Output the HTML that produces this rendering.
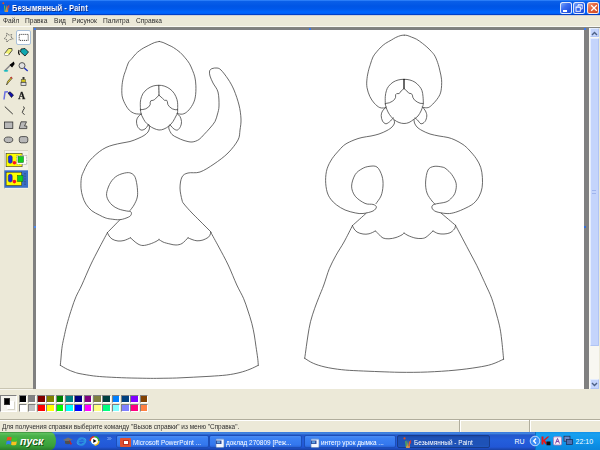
<!DOCTYPE html>
<html><head><meta charset="utf-8">
<style>
*{margin:0;padding:0;box-sizing:border-box}
html,body{width:600px;height:450px;overflow:hidden;background:#ECE9D8;font-family:"Liberation Sans",sans-serif}
#menu span,#status .t,.task .t,#title .t{will-change:transform}
.abs{position:absolute}
#title{left:0;top:0;width:600px;height:15px;background:linear-gradient(#3a8cff 0px,#0a5fe8 1.5px,#0055e5 6px,#0058ea 9px,#0066ff 12px,#0060f8 13.5px,#0040c8 14.5px)}
#title .t{left:11.8px;top:2.6px;color:#fff;font-weight:bold;font-size:8.9px;letter-spacing:0.1px;transform:scaleX(0.84);transform-origin:0 0;white-space:nowrap;text-shadow:1px 1px 0 #0a2c8a}
.wb{top:1.5px;width:12px;height:12px;border:1px solid rgba(255,255,255,0.85);border-radius:2.5px;background:linear-gradient(135deg,#7aa6fa,#3a6cf0 40%,#2455e2 75%,#1d4bd4)}
#menu{left:0;top:15px;width:600px;height:12px;background:#ECE9D8}
#menu span{position:absolute;top:2.2px;font-size:6.62px;color:#2e2e2e;white-space:nowrap}
#canvasarea{left:33px;top:27px;width:567px;height:1.2px;background:#868680}
#canvasarea2{left:33px;top:28px;width:556px;height:361px;background:#808080}
#canvas{left:35.5px;top:29.8px;width:548.5px;height:359px;background:#fff}

#toolbox{left:0;top:27px;width:33px;height:362px;background:#ECE9D8}
.tsel{left:16.2px;top:30.3px;width:14.8px;height:14.3px;background:#fff;border:1px solid #a8bfd8;border-radius:2px}
#optbox{left:4.2px;top:150px;width:24.1px;height:39px;background:#F3F1E7;border-top:1px solid #d8d4c0;border-left:1px solid #d8d4c0}
#palette{left:0;top:389px;width:600px;height:30px;background:#ECE9D8}
.sw{position:absolute;width:8.4px;height:8.2px;border-top:1px solid #808080;border-left:1px solid #808080;border-right:1px solid #fff;border-bottom:1px solid #fff}
#status{left:0;top:419px;width:600px;height:13px;background:#ECE9D8;border-top:1px solid #b0ad9c}
#status .t{left:1.6px;top:2.6px;font-size:6.42px;color:#2e2e2e;white-space:nowrap}
#taskbar{left:0;top:432px;width:600px;height:18px;background:linear-gradient(#3168d5 0px,#4993e6 1px,#2457c9 3px,#245edb 8px,#2157d6 15px,#1941a5 18px)}
#start{left:0;top:432px;width:55.5px;height:18px;border-radius:0 5px 5px 0/0 9px 9px 0;background:linear-gradient(#3a8a3a 0px,#5cc05c 1.5px,#48b048 4px,#3fa83f 10px,#38a038 14px,#2a7d2a 18px)}
#start .t{left:20px;top:2.5px;color:#fff;font-weight:bold;font-style:italic;font-size:10.5px;text-shadow:1px 1px 0 #1c501c}
.task{top:435px;height:12.5px;border-radius:2px;background:linear-gradient(#4a8cf2,#3c81f3 20%,#3377ee 80%,#2a63d8);border:1px solid #1c4eb8}
.task .t{position:absolute;left:16.3px;top:2.7px;color:#fff;font-size:6.45px;white-space:nowrap}
.task.act{background:linear-gradient(#1a48a8,#1e52b7 20%,#1e52b7 80%,#2058c0);border-color:#173c8c}
#tray{left:535px;top:432px;width:65px;height:18px;background:linear-gradient(#1290e8 0px,#18a0f0 2px,#0f94ea 10px,#0b86dc 18px);border-left:1px solid #0a6fc0}
</style></head>
<body>
<div id="title" class="abs">
  <svg class="abs" style="left:2px;top:2px" width="8" height="10" viewBox="0 0 8 10"><circle cx="1.3" cy="1.3" r="1" fill="#e05020"/><path d="M2 4 L3 3 L3.5 9.5 L2.5 9.5Z" fill="#60c040"/><path d="M3.5 9.5 L4.5 2.5 L5 9.5Z" fill="#d0b030"/><path d="M4.8 9.5 L5.5 4 L6.8 3.5 L6 9.5Z" fill="#e06030"/><path d="M6.5 3.5 L7.3 2.5 L7.2 6 L6.5 6Z" fill="#f03020"/><path d="M2.5 8.5 L6.2 8.5 L6 10 L2.8 10Z" fill="#d09050"/></svg>
  <div class="t abs">Безымянный - Paint</div>
  <div class="wb abs" style="left:559.5px"><div class="abs" style="left:2.3px;top:7.3px;width:4.5px;height:1.8px;background:#fff"></div></div>
  <div class="wb abs" style="left:573px"><svg class="abs" style="left:0;top:0" width="10" height="10" viewBox="0 0 10 10"><path d="M4 3.5 V1.8 H8.2 V6 H6.5" fill="none" stroke="#fff" stroke-width="0.9"/><rect x="2" y="4" width="4.3" height="4.3" fill="none" stroke="#fff" stroke-width="0.9"/><path d="M2 4.3 H6.3 M4 2.1 H8.2" stroke="#fff" stroke-width="0.6"/></svg></div>
  <div class="wb abs" style="left:587px;width:11.5px;background:linear-gradient(135deg,#f0a080,#e2603a 45%,#d04a22)"><svg class="abs" style="left:1.5px;top:1.5px" width="8" height="8" viewBox="0 0 8 8"><path d="M1.2 1.2L6.8 6.8M6.8 1.2L1.2 6.8" stroke="#fff" stroke-width="1.3"/></svg></div>
</div>
<div id="menu" class="abs">
  <div class="abs" style="left:0;top:0;width:600px;height:1px;background:#cfd0d6"></div>
  <span style="left:3px">Файл</span>
  <span style="left:25.3px">Правка</span>
  <span style="left:53.7px">Вид</span>
  <span style="left:72px">Рисунок</span>
  <span style="left:103px">Палитра</span>
  <span style="left:136px">Справка</span>
</div>

<div id="toolbox" class="abs"></div>
<div class="abs" style="left:0;top:25.8px;width:600px;height:1px;background:#faf9f3"></div>
<div class="tsel abs"></div>
<div id="tools" class="abs" style="left:0;top:0;width:33px;height:190px">
<svg width="33" height="190" viewBox="0 0 33 190" style="position:absolute;left:0;top:0">
 <!-- free select -->
 <path d="M6.8 33.3 L9.1 35.2 L11.7 34.6 L11 37.2 L13.2 38.8 L9.6 39.6 L6.8 42 L6.4 39.4 L4.2 38.6 L6.4 36.5 Z" fill="none" stroke="#333" stroke-width="0.75" stroke-dasharray="1 0.7"/>
 <!-- rect select -->
 <rect x="19.2" y="34.4" width="9" height="6" fill="none" stroke="#222" stroke-width="0.8" stroke-dasharray="1.2 0.8"/>
 <!-- eraser -->
 <path d="M4.5 53.5 L8.5 48.5 L12 48.5 L12 50.5 L8.5 55 L4.5 55 Z" fill="#f0f070" stroke="#333" stroke-width="0.8"/>
 <path d="M4.5 53.5 L8 53.5 L8.5 55 L4.5 55Z" fill="#fff"/>
 <!-- fill -->
 <path d="M21 49 L25 48.5 L28.5 52 L25 56 L20.5 52 Z" fill="#10a8b0" stroke="#111" stroke-width="0.8"/>
 <path d="M19 50 Q18 53 19.5 55" fill="none" stroke="#000" stroke-width="1.2"/>
 <!-- picker -->
 <path d="M5 70.5 L11 64.5" stroke="#888" stroke-width="1.6"/>
 <path d="M10.5 65 L13.5 62.5 L14 64 L12 66.5Z" fill="#000" stroke="#000" stroke-width="1.2"/>
 <ellipse cx="6" cy="70.8" rx="2.4" ry="0.9" fill="#10b8c0"/>
 <!-- magnifier -->
 <circle cx="22" cy="65.6" r="3" fill="#e0e0e0" stroke="#555" stroke-width="1"/>
 <path d="M24.3 68 L27.7 71" stroke="#2030c0" stroke-width="1.4"/>
 <!-- pencil -->
 <path d="M6.5 85 L7.5 81.5 L11 77.5 L12 78.5 L8.5 82.5 Z" fill="#e8d020" stroke="#222" stroke-width="0.6"/>
 <path d="M10.5 77.5 L11.5 77 L12 78.3Z" fill="#c03030" stroke="#c03030" stroke-width="0.8"/>
 <!-- brush -->
 <rect x="22.5" y="77" width="2" height="3" fill="#333"/>
 <rect x="21.2" y="79.5" width="4.5" height="2.6" fill="#d8c818" stroke="#444" stroke-width="0.5"/>
 <rect x="21" y="82.3" width="5" height="3.3" fill="#ddd" stroke="#222" stroke-width="0.6"/>
 <!-- airbrush -->
 <path d="M4 99.5 L5 92 L8 91.8" fill="none" stroke="#6a70e0" stroke-width="1.5"/>
 <path d="M8 93 L10 91.8 L13.5 95 L11.5 97.5 Z" fill="#1010b0" stroke="#000" stroke-width="0.6"/>
 <!-- text A -->
 <text x="18.2" y="98.8" font-family="Liberation Serif" font-weight="bold" font-size="9.6px" fill="#111" stroke="#333" stroke-width="0.3">A</text>
 <!-- line -->
 <path d="M4.8 106.6 L12.8 114.1" stroke="#222" stroke-width="0.9"/>
 <!-- curve -->
 <path d="M23.5 106.5 Q25.5 108 23 110.5 Q21 112.5 24.5 114.8" fill="none" stroke="#222" stroke-width="0.9"/>
 <!-- rect -->
 <rect x="4.5" y="122" width="8.3" height="6.4" fill="#b8b8b8" stroke="#333" stroke-width="0.8"/>
 <!-- polygon -->
 <path d="M21 121.8 L26.5 121.8 L24.5 126 L26.8 126 L26.8 128.6 L19.2 128.6 Z" fill="#b8b8b8" stroke="#333" stroke-width="0.8"/>
 <!-- ellipse -->
 <ellipse cx="8.5" cy="139.8" rx="4.3" ry="2.8" fill="#b8b8b8" stroke="#333" stroke-width="0.8"/>
 <!-- rounded rect -->
 <rect x="19.3" y="136.6" width="8.5" height="6.2" rx="2" fill="#b8b8b8" stroke="#333" stroke-width="0.8"/>
</svg>
</div>
<div id="optbox" class="abs"></div>
<svg class="abs" style="left:0;top:145px" width="33" height="50" viewBox="0 145 33 50">
 <rect x="6.1" y="153.3" width="16" height="13.4" fill="#ffff00" stroke="#333" stroke-width="0.6"/>
 <rect x="16.7" y="155.6" width="10" height="8.8" fill="#fff" stroke="#555" stroke-width="0.5" stroke-dasharray="1 0.6"/>
 <rect x="8.3" y="155.5" width="3.9" height="7.8" rx="1.8" fill="#1830e0" stroke="#102080" stroke-width="0.5"/>
 <circle cx="14.4" cy="162.8" r="1.8" fill="#ff1020"/>
 <rect x="18" y="156.5" width="5.5" height="6" fill="#10d020" stroke="#106010" stroke-width="0.5"/>
 <rect x="4.3" y="170.3" width="23.7" height="17.5" fill="#3a6fc8"/>
 <rect x="6.1" y="172.2" width="15.6" height="13.4" fill="#ffff00" stroke="#333" stroke-width="0.6"/>
 <rect x="8.3" y="174.3" width="3.9" height="7.8" rx="1.8" fill="#1830e0" stroke="#102080" stroke-width="0.5"/>
 <circle cx="14.4" cy="181.6" r="1.8" fill="#ff1020"/>
 <rect x="17.5" y="175.5" width="5.5" height="6" fill="#10d020" stroke="#106010" stroke-width="0.5"/>
 <path d="M25 173 L25 185" stroke="#222" stroke-width="0.6" stroke-dasharray="0.8 0.8"/>
</svg>
<div id="palette" class="abs"></div>
<div class="abs" style="left:0;top:388.4px;width:33px;height:1px;background:#c9c5b2"></div><div class="abs" style="left:0;top:389.4px;width:33px;height:1px;background:#f6f5ee"></div>
<div class="abs" style="left:0;top:394.8px;width:16.8px;height:17px;border-top:1px solid #808080;border-left:1px solid #808080;border-right:1px solid #fff;border-bottom:1px solid #fff;background:#F5F4EE"></div>
<div class="abs" style="left:7.2px;top:401.4px;width:7.8px;height:8.3px;background:#fff;border:1px solid #d6d4c8;border-top-color:#fff;border-left-color:#fff"></div>
<div class="abs" style="left:3.6px;top:398px;width:6.7px;height:7px;background:#000;border:0.5px solid #333"></div>
<div class="sw" style="left:18.50px;top:394.6px;background:#000000"></div><div class="sw" style="left:18.50px;top:403.8px;background:#FFFFFF"></div>
<div class="sw" style="left:27.83px;top:394.6px;background:#808080"></div><div class="sw" style="left:27.83px;top:403.8px;background:#C0C0C0"></div>
<div class="sw" style="left:37.16px;top:394.6px;background:#800000"></div><div class="sw" style="left:37.16px;top:403.8px;background:#FF0000"></div>
<div class="sw" style="left:46.49px;top:394.6px;background:#808000"></div><div class="sw" style="left:46.49px;top:403.8px;background:#FFFF00"></div>
<div class="sw" style="left:55.82px;top:394.6px;background:#008000"></div><div class="sw" style="left:55.82px;top:403.8px;background:#00FF00"></div>
<div class="sw" style="left:65.15px;top:394.6px;background:#008080"></div><div class="sw" style="left:65.15px;top:403.8px;background:#00FFFF"></div>
<div class="sw" style="left:74.48px;top:394.6px;background:#000080"></div><div class="sw" style="left:74.48px;top:403.8px;background:#0000FF"></div>
<div class="sw" style="left:83.81px;top:394.6px;background:#800080"></div><div class="sw" style="left:83.81px;top:403.8px;background:#FF00FF"></div>
<div class="sw" style="left:93.14px;top:394.6px;background:#808040"></div><div class="sw" style="left:93.14px;top:403.8px;background:#FFFF80"></div>
<div class="sw" style="left:102.47px;top:394.6px;background:#004040"></div><div class="sw" style="left:102.47px;top:403.8px;background:#00FF80"></div>
<div class="sw" style="left:111.80px;top:394.6px;background:#0080FF"></div><div class="sw" style="left:111.80px;top:403.8px;background:#80FFFF"></div>
<div class="sw" style="left:121.13px;top:394.6px;background:#004080"></div><div class="sw" style="left:121.13px;top:403.8px;background:#8080FF"></div>
<div class="sw" style="left:130.46px;top:394.6px;background:#8000FF"></div><div class="sw" style="left:130.46px;top:403.8px;background:#FF0080"></div>
<div class="sw" style="left:139.79px;top:394.6px;background:#804000"></div><div class="sw" style="left:139.79px;top:403.8px;background:#FF8040"></div>

<div id="status" class="abs"><div class="abs" style="left:0;top:0;width:600px;height:1px;background:#fff"></div><div class="t abs">Для получения справки выберите команду "Вызов справки" из меню "Справка".</div>
<div class="abs" style="left:459px;top:0;width:2px;height:13px;border-left:1px solid #b0ad9c;border-right:1px solid #fff"></div>
<div class="abs" style="left:529px;top:0;width:2px;height:13px;border-left:1px solid #b0ad9c;border-right:1px solid #fff"></div>
</div>
<div id="taskbar" class="abs"></div>
<div id="start" class="abs"><div class="t abs">пуск</div>
 <svg class="abs" style="left:5.5px;top:2.5px" width="12.5" height="12.5" viewBox="0 0 11 11"><path d="M1 2 Q3 1 5 2 L4.5 5 Q2.5 4 0.5 5Z" fill="#f05020"/><path d="M5.5 2 Q7.5 3 10 2 L9.5 5 Q7 6 5 5Z" fill="#40c030"/><path d="M0.5 5.5 Q2.5 4.5 4.5 5.5 L4 8.5 Q2 7.5 0 8.5Z" fill="#3080f0"/><path d="M5 5.5 Q7 6.5 9.5 5.5 L9 8.5 Q6.5 9.5 4.5 8.5Z" fill="#f8c020"/></svg>
</div>
<svg class="abs" style="left:58px;top:432px" width="60" height="18" viewBox="0 0 60 18">
 <path d="M5 8 L10 5.5 L14.5 7.5 L10 10Z" fill="#707070"/><path d="M7 9 L7 11.5 Q10 13 12.5 11.5 L12.5 9" fill="#505050"/><path d="M11.5 8.5 L13.5 12 L12.5 12.5" fill="#d02020" stroke="#d02020" stroke-width="0.8"/>
 <ellipse cx="23.5" cy="9.5" rx="4.5" ry="2.6" fill="none" stroke="#40a8f0" stroke-width="1" transform="rotate(-25 23.5 9.5)"/><circle cx="23.5" cy="9.5" r="3.4" fill="none" stroke="#2a90e0" stroke-width="1.8"/><path d="M20.5 9.2 H26.5" stroke="#2a90e0" stroke-width="1.2"/>
 <circle cx="36.5" cy="9" r="4.3" fill="#fff"/><path d="M32.2 9 A4.3 4.3 0 0 1 36.5 4.7" stroke="#e03020" stroke-width="1.6" fill="none"/><path d="M36.5 4.7 A4.3 4.3 0 0 1 40.8 9" stroke="#30b030" stroke-width="1.6" fill="none"/><path d="M40.8 9 A4.3 4.3 0 0 1 36.5 13.3" stroke="#f0c020" stroke-width="1.6" fill="none"/><path d="M36.5 13.3 A4.3 4.3 0 0 1 32.2 9" stroke="#2070e0" stroke-width="1.6" fill="none"/><path d="M35.3 7 L38.5 9 L35.3 11Z" fill="#000"/>
 <path d="M49.5 5 L51 6.5 L49.5 8 M51.5 5 L53 6.5 L51.5 8" stroke="#a8c8ff" stroke-width="0.8" fill="none"/>
</svg>
<div class="task abs" style="left:116px;width:92.5px"><div class="abs" style="left:2.5px;top:1.5px;width:11px;height:9px;background:#e05030;border-radius:1px"><div class="abs" style="left:3px;top:2px;width:6px;height:5px;background:#fff;border:1px solid #c03020"></div></div><div class="t">Microsoft PowerPoint ...</div></div>
<div class="task abs" style="left:209px;width:93px"><svg class="abs" style="left:4.5px;top:1.5px" width="10" height="10" viewBox="0 0 10 10"><rect x="1" y="1" width="8" height="8.5" rx="1" fill="#f4f6ff" stroke="#6080b0" stroke-width="0.6"/><rect x="1" y="2.5" width="5.5" height="3.5" fill="#3050a0"/><rect x="2" y="3.2" width="3" height="2" fill="#60a0e0"/><path d="M1.5 1.3 H8.5" stroke="#90b8f0" stroke-width="1"/></svg><div class="t">доклад 270809 [Реж...</div></div>
<div class="task abs" style="left:304px;width:92px"><svg class="abs" style="left:4.5px;top:1.5px" width="10" height="10" viewBox="0 0 10 10"><rect x="1" y="1" width="8" height="8.5" rx="1" fill="#f4f6ff" stroke="#6080b0" stroke-width="0.6"/><rect x="1" y="2.5" width="5.5" height="3.5" fill="#3050a0"/><rect x="2" y="3.2" width="3" height="2" fill="#60a0e0"/><path d="M1.5 1.3 H8.5" stroke="#90b8f0" stroke-width="1"/></svg><div class="t">интегр урок дымка ...</div></div>
<div class="task act abs" style="left:397px;width:93px"><svg class="abs" style="left:4.5px;top:1px" width="9" height="11" viewBox="0 0 8 10"><circle cx="1.3" cy="1.3" r="1" fill="#e05020"/><path d="M2 4 L3 3 L3.5 9.5 L2.5 9.5Z" fill="#60c040"/><path d="M3.5 9.5 L4.5 2.5 L5 9.5Z" fill="#d0b030"/><path d="M4.8 9.5 L5.5 4 L6.8 3.5 L6 9.5Z" fill="#e06030"/><path d="M6.5 3.5 L7.3 2.5 L7.2 6 L6.5 6Z" fill="#f03020"/><path d="M2.5 8.5 L6.2 8.5 L6 10 L2.8 10Z" fill="#d09050"/></svg><div class="t">Безымянный - Paint</div></div>
<div class="abs" style="left:514.5px;top:438px;color:#fff;font-size:7px;white-space:nowrap">RU</div>
<div id="tray" class="abs"></div>
<svg class="abs" style="left:528px;top:432px" width="72" height="18" viewBox="0 0 72 18">
 <circle cx="7" cy="9" r="4.8" fill="#3a8cf4" stroke="#cfe4ff" stroke-width="0.9"/><path d="M8 6.6 L5.7 9 L8 11.4" stroke="#fff" stroke-width="1.4" fill="none"/>
 <path d="M13.5 4.5 L15.5 4.5 L15.5 8 L19.5 4.5 L21.5 4.5 L17 8.6 L19 11 L17.5 12.5 L15.5 9.5 L15.5 12.5 L13.5 12.5Z" fill="#e81818"/><rect x="18.5" y="9.5" width="4" height="3.8" fill="#111"/>
 <rect x="25.5" y="4.8" width="8" height="8.2" rx="1.2" fill="#f6eef6" stroke="#b880b8" stroke-width="0.8"/><path d="M27.5 11.5 L29.5 6.5 L31.5 11.5 M28.3 9.5 H30.7" stroke="#7030a0" stroke-width="0.9" fill="none"/>
 <rect x="36" y="4.2" width="6" height="5" fill="#6a88c8" stroke="#1a2850" stroke-width="0.7"/><rect x="38.5" y="7.5" width="6" height="5" fill="#5070b0" stroke="#1a2850" stroke-width="0.7"/>
</svg>
<div class="abs" style="left:575.6px;top:438px;color:#fff;font-size:7px;white-space:nowrap">22:10</div>
<!-- scrollbar -->
<div class="abs" style="left:588.6px;top:28px;width:11.4px;height:361px;background:#ECE9D8"></div>
<div class="abs" style="left:589.3px;top:28.2px;width:9.6px;height:360.8px;background:#F8F7F1"></div>
<div class="abs" style="left:589.5px;top:38.2px;width:9.1px;height:308.2px;background:#C4D4FC;border:1px solid #e4ecfe;border-right-color:#b0c4f4;border-bottom-color:#b0c4f4;border-radius:1px"></div>
<div class="abs" style="left:591.8px;top:189.8px;width:4px;height:4.6px;border-top:1px solid #9fb5ee;border-bottom:1px solid #9fb5ee"></div>
<div class="abs" style="left:589.5px;top:28.2px;width:9.1px;height:8.8px;background:#C4D4FC;border:1px solid #e4ecfe;border-right-color:#b0c4f4;border-bottom-color:#b0c4f4;border-radius:1px"><svg class="abs" style="left:0.5px;top:1.5px" width="7" height="5" viewBox="0 0 7 5"><path d="M1 4 L3.5 1.5 L6 4" stroke="#4d6185" stroke-width="1.4" fill="none"/></svg></div>
<div class="abs" style="left:589.5px;top:379px;width:9.1px;height:9.9px;background:#C4D4FC;border:1px solid #e4ecfe;border-right-color:#b0c4f4;border-bottom-color:#b0c4f4;border-radius:1px"><svg class="abs" style="left:0.5px;top:2px" width="7" height="5" viewBox="0 0 7 5"><path d="M1 1 L3.5 3.5 L6 1" stroke="#4d6185" stroke-width="1.4" fill="none"/></svg></div>
<div id="canvasarea2" class="abs"></div><div id="canvasarea" class="abs"></div>
<div id="canvas" class="abs"></div>
<div class="abs" style="left:34px;top:28.3px;width:2px;height:1.7px;background:#3a78f0"></div><div class="abs" style="left:584px;top:28.3px;width:2px;height:1.7px;background:#3a78f0"></div><div class="abs" style="left:309px;top:28.3px;width:2px;height:1.7px;background:#3a78f0"></div><div class="abs" style="left:34px;top:226.3px;width:2px;height:2.2px;background:#4a88f0"></div><div class="abs" style="left:584.2px;top:226.3px;width:2.2px;height:2.2px;background:#2f6fe0"></div>
<svg id="drawing" class="abs" style="left:0;top:0" width="600" height="450" viewBox="0 0 600 450"><g fill="none" stroke="#444" stroke-width="0.8" stroke-linejoin="round" stroke-linecap="round">
<path d="M141.6 114.1 C140.5 114.0 136.9 114.2 134.9 113.6 C132.9 112.9 131.0 111.9 129.3 110.2 C127.6 108.5 126.1 106.0 124.9 103.6 C123.7 101.2 122.6 98.9 122.1 95.8 C121.6 92.7 121.8 88.0 122.1 84.7 C122.4 81.4 123.2 78.2 123.8 75.8 C124.4 73.4 125.0 72.5 125.7 70.3 C126.5 68.1 127.3 64.9 128.3 62.9 C129.3 60.9 130.7 60.0 131.9 58.5 C133.1 57.0 134.4 55.4 135.6 54.1 C136.8 52.8 138.0 51.8 139.3 50.8 C140.7 49.8 142.1 48.8 143.7 47.9 C145.3 47.0 147.0 46.2 148.8 45.3 C150.6 44.4 152.9 43.1 154.7 42.5 C156.4 41.9 158.5 41.7 159.3 41.5"/>
<path d="M159.3 41.5 C159.9 41.7 161.5 41.9 163.1 42.5 C164.7 43.1 167.3 44.5 169.0 45.3 C170.7 46.1 171.6 46.3 173.4 47.5 C175.2 48.7 178.1 50.6 180.0 52.3 C181.9 54.0 183.5 55.9 185.1 57.8 C186.7 59.7 188.3 61.6 189.5 63.7 C190.7 65.8 191.6 68.1 192.5 70.3 C193.4 72.5 194.2 74.3 194.8 76.9 C195.4 79.5 195.8 82.5 195.9 85.8 C196.0 89.1 195.9 93.8 195.3 96.9 C194.8 100.1 193.9 102.3 192.6 104.7 C191.3 107.1 189.3 109.7 187.6 111.3 C185.9 112.9 184.4 113.7 182.6 114.1 C180.8 114.5 177.9 113.6 177.0 113.5"/>
<path d="M140.5 110.0 C140.5 109.1 140.3 106.4 140.3 104.7 C140.3 103.0 140.3 101.4 140.7 99.6 C141.1 97.8 141.8 95.5 142.9 93.7 C144.0 91.9 145.6 90.3 147.3 89.0 C149.0 87.7 151.2 86.6 153.1 86.0 C155.0 85.4 157.0 85.3 158.8 85.3 C160.6 85.3 162.2 85.4 164.1 86.0 C166.0 86.6 168.3 87.7 170.0 89.0 C171.7 90.3 173.2 91.9 174.4 93.7 C175.6 95.5 176.4 97.8 177.0 99.6 C177.6 101.4 177.6 103.0 177.7 104.7 C177.8 106.4 177.6 108.6 177.6 110.0 C177.6 111.4 177.8 112.0 177.5 113.0 C177.2 114.0 176.8 114.6 176.0 116.0 C175.2 117.4 174.2 119.8 173.0 121.5 C171.8 123.2 170.5 124.8 169.0 126.0 C167.5 127.2 165.7 128.3 164.0 129.0 C162.3 129.7 160.7 130.1 159.0 130.0 C157.3 129.9 155.7 129.2 154.0 128.5 C152.3 127.8 150.5 126.7 149.0 125.5 C147.5 124.3 146.1 122.9 145.0 121.5 C143.9 120.1 143.2 118.3 142.5 117.0 C141.8 115.7 141.3 114.7 141.0 113.5 C140.7 112.3 140.6 110.6 140.5 110.0"/>
<path d="M158.8 85.3 C158.8 87.0 159.0 93.5 159.0 95.2" stroke="#333" stroke-width="0.9"/>
<path d="M159.0 95.2 L154.6 99.6 L153.1 100.3 L150.9 100.7 L150.2 102.2 L150.2 104.7 L148.7 106.9 L145.8 108.8 L142.9 109.5 L140.3 109.7"/>
<path d="M159.0 95.2 L162.7 98.5 L164.5 100.3 L166.7 100.3 L167.4 101.8 L167.8 104.4 L169.3 106.6 L172.2 108.8 L175.1 109.7 L177.7 109.7"/>
<path d="M141.0 114.0 C140.5 114.5 138.8 115.8 138.0 117.0 C137.2 118.2 136.6 119.4 136.5 121.0 C136.4 122.6 136.8 125.0 137.5 126.5 C138.2 128.0 139.8 129.6 141.0 130.0 C142.2 130.4 143.9 129.7 145.0 129.0 C146.1 128.3 146.9 126.8 147.5 126.0 C148.1 125.2 148.3 124.8 148.5 124.5"/>
<path d="M177.5 114.0 C177.9 114.4 179.3 115.2 180.0 116.5 C180.7 117.8 181.4 119.8 181.5 121.5 C181.6 123.2 181.2 125.1 180.5 126.5 C179.8 127.9 178.6 129.6 177.5 130.0 C176.4 130.4 175.1 129.7 174.0 129.0 C172.9 128.3 171.7 126.8 171.0 126.0 C170.3 125.2 170.2 124.8 170.0 124.5"/>
<path d="M149.0 125.0 C149.1 125.5 149.7 126.8 149.5 128.0 C149.3 129.2 148.9 130.8 148.0 132.0 C147.1 133.2 145.7 134.4 144.0 135.5 C142.3 136.6 140.3 137.5 138.0 138.5 C135.7 139.5 132.7 140.8 130.0 141.5 C127.3 142.2 124.8 142.4 122.0 143.0 C119.2 143.6 115.7 144.2 113.0 145.0 C110.3 145.8 108.3 146.4 106.0 147.5 C103.7 148.6 101.5 150.0 99.3 151.7 C97.1 153.4 94.6 155.6 92.7 157.5 C90.8 159.4 89.2 160.9 87.7 163.3 C86.2 165.7 84.6 169.2 83.5 171.7 C82.4 174.2 81.7 175.5 81.3 178.3 C80.9 181.1 80.8 185.2 81.0 188.3 C81.2 191.4 81.9 194.0 82.7 196.7 C83.5 199.3 84.5 201.8 86.0 204.2 C87.5 206.5 89.6 209.0 91.8 210.8 C94.0 212.6 97.1 213.8 99.3 215.0 C101.5 216.2 103.3 217.1 105.2 217.8 C107.1 218.5 108.2 218.7 110.7 219.0 C113.2 219.3 117.0 220.0 120.0 219.7 C123.0 219.4 126.8 217.9 128.7 217.0 C130.6 216.1 131.0 215.2 131.3 214.3 C131.6 213.4 131.5 212.2 130.7 211.7 C129.9 211.1 128.7 211.4 126.7 211.0 C124.7 210.6 121.2 210.0 118.7 209.0 C116.2 208.0 113.9 206.8 112.0 205.0 C110.1 203.2 108.1 200.5 107.3 198.3 C106.5 196.1 106.3 194.4 106.9 191.7 C107.5 189.0 109.0 185.0 110.7 182.3 C112.4 179.6 114.6 177.3 117.3 175.7 C120.0 174.1 124.2 173.0 126.7 172.7 C129.2 172.4 130.6 172.9 132.0 173.7 C133.4 174.5 134.4 175.4 135.3 177.7 C136.2 180.0 137.0 184.5 137.3 187.7 C137.6 190.9 137.9 194.1 137.3 197.0 C136.8 199.9 135.2 202.8 134.0 205.0 C132.8 207.2 130.7 209.6 130.0 210.5"/>
<path d="M169.0 126.0 C169.0 126.5 168.5 127.6 169.0 129.0 C169.5 130.4 170.7 133.1 172.0 134.5 C173.3 135.9 175.0 136.5 177.0 137.5 C179.0 138.5 181.5 139.8 184.0 140.5 C186.5 141.2 189.5 142.2 192.0 142.0 C194.5 141.8 197.0 140.8 199.0 139.5 C201.0 138.2 202.2 136.4 204.0 134.5 C205.8 132.6 208.2 130.2 210.0 128.0 C211.8 125.8 213.8 123.8 215.0 121.5 C216.2 119.2 216.8 116.6 217.5 114.0 C218.2 111.4 218.9 109.7 219.0 106.0 C219.1 102.3 219.0 95.8 218.0 92.0 C217.0 88.2 214.3 85.7 213.0 83.0 C211.7 80.3 210.6 78.0 210.0 76.0 C209.4 74.0 209.3 72.2 209.6 71.0 C209.9 69.8 210.8 69.1 212.0 68.6 C213.2 68.1 215.5 67.8 217.0 68.0 C218.5 68.2 219.2 68.2 221.0 70.0 C222.8 71.8 225.8 75.7 228.0 79.0 C230.2 82.3 232.2 85.7 234.0 90.0 C235.8 94.3 237.8 100.2 239.0 105.0 C240.2 109.8 240.8 114.8 241.0 119.0 C241.2 123.2 240.5 126.5 240.0 130.0 C239.5 133.5 240.0 136.2 238.0 140.0 C236.0 143.8 232.0 149.0 228.0 153.0 C224.0 157.0 218.7 160.8 214.0 164.0 C209.3 167.2 204.3 170.5 200.0 172.0 C195.7 173.5 191.0 172.2 188.0 173.0 C185.0 173.8 183.3 174.5 182.0 177.0 C180.7 179.5 180.0 184.2 180.0 188.0 C180.0 191.8 181.3 197.3 182.0 200.0 C182.7 202.7 182.3 201.8 184.0 204.0 C185.7 206.2 189.3 210.2 192.0 213.0 C194.7 215.8 196.8 217.8 200.0 221.0 C203.2 224.2 209.2 230.2 211.0 232.0"/>
<path d="M120.0 219.7 C117.9 221.8 109.6 230.4 107.5 232.5"/>
<path d="M107.5 232.5 C106.0 235.2 101.5 243.6 98.7 249.0 C95.9 254.4 93.4 259.0 90.6 265.0 C87.8 271.0 84.2 279.7 81.8 285.0 C79.4 290.3 77.7 292.8 76.0 296.7 C74.3 300.6 73.2 304.1 71.8 308.3 C70.4 312.5 68.8 317.8 67.7 321.7 C66.6 325.6 66.0 328.1 65.2 331.7 C64.4 335.3 63.3 340.2 62.7 343.3 C62.1 346.4 62.0 347.6 61.7 350.0 C61.4 352.4 61.2 355.4 61.0 358.0 C60.8 360.6 60.4 364.1 60.3 365.3"/>
<path d="M107.5 232.5 C107.7 232.9 107.8 233.9 108.5 235.0 C109.2 236.1 110.4 238.0 112.0 239.0 C113.6 240.0 116.0 240.8 118.0 241.0 C120.0 241.2 121.9 241.0 124.0 240.5 C126.1 240.0 129.4 238.2 130.5 237.8"/>
<path d="M130.5 237.8 C131.1 238.3 132.8 240.0 134.0 241.0 C135.2 242.0 136.5 243.2 138.0 244.0 C139.5 244.8 141.0 245.5 143.0 245.5 C145.0 245.5 147.8 244.7 150.0 244.0 C152.2 243.3 154.5 242.2 156.0 241.5 C157.5 240.8 158.5 239.8 159.0 239.5"/>
<path d="M159.0 239.5 C159.7 239.9 161.2 241.2 163.0 242.0 C164.8 242.8 167.8 243.5 170.0 244.0 C172.2 244.5 174.0 245.1 176.0 245.0 C178.0 244.9 180.0 244.7 182.0 243.5 C184.0 242.3 187.0 238.8 188.0 237.8"/>
<path d="M188.0 237.8 C188.7 238.1 190.5 239.0 192.0 239.5 C193.5 240.0 195.2 240.7 197.0 240.8 C198.8 240.9 201.2 240.6 203.0 240.0 C204.8 239.4 206.8 238.3 208.0 237.5 C209.2 236.7 209.5 235.9 210.0 235.0 C210.5 234.1 210.7 232.8 210.8 232.3"/>
<path d="M210.8 232.3 C212.1 234.8 215.9 241.6 218.8 247.0 C221.7 252.4 225.2 258.7 228.2 265.0 C231.2 271.3 234.2 279.4 236.8 285.0 C239.4 290.6 241.7 294.1 243.5 298.3 C245.3 302.5 246.3 305.8 247.7 310.0 C249.1 314.2 250.7 319.1 251.8 323.3 C252.9 327.5 253.6 331.1 254.3 335.0 C255.0 338.9 255.4 342.8 256.0 346.7 C256.6 350.6 257.3 355.2 257.7 358.3 C258.1 361.4 258.2 364.1 258.3 365.3"/>
<path d="M60.3 365.3 C61.5 366.0 65.0 368.2 67.3 369.3 C69.6 370.4 71.9 371.3 74.0 372.0 C76.1 372.7 76.8 373.1 80.0 373.7 C83.2 374.3 88.8 375.3 93.3 375.9 C97.8 376.4 101.1 376.7 106.7 377.0 C112.3 377.3 120.0 377.7 126.7 377.9 C133.4 378.1 141.1 378.2 146.7 378.3 C152.2 378.4 155.0 378.4 160.0 378.3 C165.0 378.2 171.1 378.2 176.7 378.0 C182.2 377.8 187.8 377.5 193.3 377.2 C198.9 376.9 204.4 376.7 210.0 376.3 C215.6 375.9 221.7 375.6 226.7 375.0 C231.7 374.4 236.1 373.5 240.0 372.5 C243.9 371.5 246.9 370.4 250.0 369.2 C253.1 368.0 256.9 365.9 258.3 365.3"/>
<path d="M385.9 107.8 C384.9 107.8 381.8 108.4 379.8 107.6 C377.9 106.8 375.9 105.0 374.2 103.1 C372.5 101.2 371.0 99.0 369.8 96.4 C368.6 93.8 367.5 90.5 367.0 87.6 C366.5 84.6 366.7 81.7 367.0 78.7 C367.3 75.7 368.1 72.2 368.7 69.8 C369.3 67.4 369.7 66.5 370.4 64.3 C371.1 62.1 371.9 59.0 373.0 56.9 C374.1 54.8 375.3 53.4 376.7 51.8 C378.1 50.1 379.6 48.4 381.1 47.0 C382.6 45.6 383.8 44.5 385.5 43.4 C387.2 42.2 389.6 41.1 391.3 40.1 C393.0 39.1 394.1 38.3 395.7 37.5 C397.3 36.7 399.5 35.9 400.9 35.5 C402.3 35.1 403.7 35.2 404.3 35.2"/>
<path d="M404.3 35.2 C404.8 35.2 405.9 35.1 407.1 35.4 C408.3 35.7 409.9 36.5 411.5 37.1 C413.1 37.8 414.9 38.2 416.7 39.3 C418.5 40.3 420.8 42.1 422.5 43.4 C424.2 44.7 425.4 45.7 426.9 47.0 C428.4 48.3 429.9 49.9 431.3 51.4 C432.7 52.9 433.8 54.0 435.0 56.2 C436.2 58.4 437.5 62.1 438.3 64.6 C439.1 67.0 439.3 68.4 439.9 70.9 C440.4 73.4 441.4 76.5 441.6 79.8 C441.8 83.1 441.6 87.9 441.0 90.9 C440.4 93.9 439.6 95.4 438.2 97.6 C436.8 99.8 434.4 102.5 432.7 104.2 C431.0 105.9 429.8 107.0 428.2 107.6 C426.6 108.1 423.9 107.5 423.0 107.5"/>
<path d="M385.3 104.0 C385.3 102.8 385.1 98.7 385.3 96.5 C385.5 94.3 385.8 92.4 386.4 90.7 C386.9 89.0 387.5 87.7 388.6 86.3 C389.7 84.9 391.4 83.2 393.0 82.2 C394.6 81.2 396.3 80.5 398.1 80.0 C399.9 79.5 402.0 79.3 404.0 79.3 C406.0 79.3 408.1 79.5 409.9 80.0 C411.7 80.5 413.4 81.2 415.0 82.2 C416.6 83.2 418.2 84.9 419.4 86.3 C420.6 87.7 421.4 89.0 422.0 90.7 C422.6 92.4 422.8 94.4 423.0 96.5 C423.2 98.6 423.4 101.8 423.3 103.5 C423.2 105.2 422.9 105.8 422.5 107.0 C422.1 108.2 421.8 109.5 421.0 111.0 C420.2 112.5 419.2 114.6 418.0 116.0 C416.8 117.4 415.0 118.4 413.5 119.5 C412.0 120.6 410.6 121.8 409.0 122.5 C407.4 123.2 405.7 123.5 404.0 123.5 C402.3 123.5 400.6 123.1 399.0 122.5 C397.4 121.9 395.8 121.0 394.5 120.0 C393.2 119.0 392.1 117.8 391.0 116.5 C389.9 115.2 388.8 113.6 388.0 112.0 C387.2 110.4 386.4 108.3 386.0 107.0 C385.6 105.7 385.4 104.5 385.3 104.0"/>
<path d="M404.0 79.3 C404.0 80.8 404.0 87.0 404.0 88.5" stroke="#111" stroke-width="1.25"/>
<path d="M404.0 88.5 L401.1 91.0 L399.2 93.6 L396.7 93.6 L395.6 94.7 L395.6 97.3 L394.5 99.5 L392.3 101.3 L389.3 102.8 L385.5 103.5"/>
<path d="M404.0 88.5 L406.9 91.0 L408.8 93.2 L411.3 93.6 L412.4 95.1 L412.8 97.3 L414.3 99.8 L417.2 102.0 L420.1 103.3 L423.2 103.5"/>
<path d="M386.0 107.0 C385.4 107.7 383.3 109.6 382.5 111.0 C381.7 112.4 381.2 113.8 381.2 115.5 C381.2 117.2 381.7 119.6 382.5 121.0 C383.3 122.4 384.7 123.8 386.0 123.8 C387.3 123.8 389.4 121.9 390.5 121.0 C391.6 120.1 392.0 119.0 392.5 118.5 C393.0 118.0 393.3 118.1 393.5 118.0"/>
<path d="M422.5 107.0 C423.0 107.7 424.8 109.5 425.5 111.0 C426.2 112.5 426.9 114.2 426.8 116.0 C426.7 117.8 426.0 120.2 425.0 121.5 C424.0 122.8 422.2 124.0 421.0 123.8 C419.8 123.5 418.5 121.0 417.5 120.0 C416.5 119.0 415.4 118.3 415.0 118.0"/>
<path d="M394.0 120.0 C394.1 120.5 394.8 121.8 394.5 123.0 C394.2 124.2 393.2 125.8 392.0 127.0 C390.8 128.2 389.2 129.3 387.0 130.5 C384.8 131.7 381.7 133.1 379.0 134.0 C376.3 134.9 373.8 135.4 371.0 136.0 C368.2 136.6 364.8 136.8 362.0 137.5 C359.2 138.2 356.8 138.8 354.0 140.0 C351.2 141.2 347.4 142.8 345.0 144.5 C342.6 146.2 341.4 147.6 339.3 150.0 C337.2 152.4 334.1 155.6 332.1 158.7 C330.1 161.8 328.2 165.2 327.1 168.8 C326.0 172.4 325.6 176.5 325.6 180.3 C325.6 184.2 326.2 188.8 327.1 191.9 C328.0 195.0 329.1 196.9 330.7 199.1 C332.3 201.3 334.1 203.1 336.5 204.9 C338.9 206.7 342.0 208.7 345.1 210.0 C348.2 211.3 352.2 212.3 355.2 212.9 C358.2 213.5 360.0 213.8 363.0 213.5 C366.0 213.2 370.8 212.1 373.0 211.0 C375.2 209.9 376.4 208.1 376.4 207.0 C376.4 205.9 374.9 205.0 373.0 204.4 C371.1 203.8 368.0 204.8 365.0 203.4 C362.0 202.0 357.4 199.1 355.2 196.2 C353.0 193.3 351.6 189.7 351.6 186.1 C351.6 182.5 353.5 177.5 355.2 174.6 C356.9 171.7 359.7 170.2 362.0 168.8 C364.3 167.4 366.5 166.7 369.0 166.4 C371.5 166.1 374.8 165.4 377.0 167.0 C379.2 168.6 381.0 172.8 382.0 176.0 C383.0 179.2 383.2 182.7 383.0 186.0 C382.8 189.3 382.2 193.1 381.0 196.0 C379.8 198.9 376.8 202.3 376.0 203.6"/>
<path d="M414.0 119.5 C414.1 120.1 414.0 121.8 414.5 123.0 C415.0 124.2 415.8 125.8 417.0 127.0 C418.2 128.2 419.8 129.3 422.0 130.5 C424.2 131.7 427.2 133.1 430.0 134.0 C432.8 134.9 436.0 135.4 439.0 136.0 C442.0 136.6 445.3 136.8 448.0 137.5 C450.7 138.2 452.5 138.8 455.0 140.0 C457.5 141.2 460.6 142.8 463.0 144.5 C465.4 146.2 466.9 147.6 469.1 150.0 C471.3 152.4 474.4 155.8 476.3 158.7 C478.2 161.6 479.7 164.2 480.7 167.3 C481.7 170.4 482.2 174.1 482.4 177.5 C482.6 180.9 482.6 184.5 482.1 187.6 C481.6 190.7 480.6 193.5 479.2 196.2 C477.8 198.8 476.1 201.3 473.5 203.5 C470.9 205.7 466.7 207.6 463.3 209.2 C459.9 210.8 456.1 212.2 453.2 212.9 C450.3 213.6 448.9 213.7 446.0 213.5 C443.1 213.3 438.3 212.5 436.0 211.6 C433.7 210.7 432.3 209.2 432.0 208.0 C431.7 206.8 431.7 205.4 434.0 204.4 C436.3 203.4 443.0 203.1 446.0 202.0 C449.0 200.9 450.2 199.4 451.8 197.7 C453.4 196.0 454.7 194.3 455.4 191.9 C456.1 189.5 456.7 186.1 456.1 183.2 C455.5 180.3 453.5 177.0 451.8 174.6 C450.1 172.2 447.6 170.1 446.0 168.8 C444.4 167.5 444.0 167.4 442.0 167.0 C440.0 166.6 436.3 165.9 434.0 166.4 C431.7 166.9 429.4 167.4 428.0 170.0 C426.6 172.6 425.8 178.2 425.6 182.0 C425.4 185.8 425.9 189.8 427.0 193.0 C428.1 196.2 430.7 199.2 432.0 201.0 C433.3 202.8 434.5 203.5 435.0 204.0"/>
<path d="M366.0 213.4 C363.8 215.4 354.8 223.5 352.5 225.5"/>
<path d="M352.5 225.5 C351.1 228.2 346.8 237.0 344.0 242.0 C341.2 247.0 338.4 250.9 336.0 255.3 C333.6 259.8 331.3 263.8 329.3 268.7 C327.3 273.6 325.6 280.2 323.8 285.0 C322.1 289.8 320.3 293.6 318.8 297.5 C317.3 301.4 316.1 304.3 314.7 308.3 C313.3 312.3 311.6 317.2 310.5 321.7 C309.4 326.1 308.7 330.8 308.0 335.0 C307.3 339.2 306.9 342.8 306.3 346.7 C305.8 350.6 305.0 356.4 304.7 358.3"/>
<path d="M352.5 225.5 C352.7 225.9 352.8 226.9 353.5 228.0 C354.2 229.1 355.4 231.0 357.0 232.0 C358.6 233.0 361.0 233.7 363.0 234.0 C365.0 234.3 366.9 234.3 369.0 233.8 C371.1 233.3 374.4 231.5 375.5 231.0"/>
<path d="M375.5 231.0 C376.1 231.6 377.8 233.3 379.0 234.5 C380.2 235.7 381.3 237.3 383.0 238.0 C384.7 238.7 386.8 238.9 389.0 238.8 C391.2 238.7 393.8 238.2 396.0 237.5 C398.2 236.8 400.7 235.6 402.0 234.8 C403.3 234.1 403.7 233.3 404.0 233.0"/>
<path d="M404.0 233.0 C404.7 233.4 406.2 234.7 408.0 235.5 C409.8 236.3 412.8 237.5 415.0 238.0 C417.2 238.5 419.2 238.6 421.0 238.5 C422.8 238.4 424.0 238.4 426.0 237.2 C428.0 235.9 431.8 232.0 433.0 231.0"/>
<path d="M433.0 231.0 C433.8 231.4 436.2 233.0 438.0 233.5 C439.8 234.0 442.0 234.1 444.0 234.0 C446.0 233.9 448.4 233.5 450.0 232.8 C451.6 232.1 452.7 230.8 453.5 230.0 C454.3 229.2 454.7 228.8 455.0 228.0 C455.3 227.2 455.4 225.8 455.5 225.3"/>
<path d="M441.0 213.0 C443.4 215.1 453.1 223.2 455.5 225.3"/>
<path d="M455.5 225.3 C456.8 227.8 460.9 235.4 463.3 240.0 C465.7 244.6 467.8 248.5 470.0 252.7 C472.2 256.9 474.7 261.3 476.7 265.3 C478.7 269.3 480.5 273.4 482.0 276.7 C483.5 280.0 484.2 281.4 485.8 285.0 C487.4 288.6 489.9 293.3 491.7 298.3 C493.5 303.3 495.3 310.0 496.7 315.0 C498.1 320.0 499.2 324.1 500.0 328.3 C500.8 332.5 501.1 334.9 501.7 340.0 C502.3 345.1 503.3 356.0 503.6 359.2"/>
<path d="M304.7 358.3 C306.1 359.1 309.9 361.9 313.3 363.3 C316.7 364.8 320.3 365.9 325.0 367.0 C329.7 368.1 336.1 369.1 341.7 369.7 C347.2 370.3 351.9 370.5 358.3 370.8 C364.7 371.1 373.1 371.4 380.0 371.7 C386.9 371.9 392.1 372.2 400.0 372.3 C407.9 372.4 418.3 372.4 427.5 372.0 C436.7 371.6 446.8 371.0 455.0 370.2 C463.2 369.4 470.9 368.4 477.0 367.4 C483.1 366.4 487.3 365.7 491.7 364.3 C496.1 362.9 501.6 360.1 503.6 359.2"/>
</g></svg>
</body></html>
